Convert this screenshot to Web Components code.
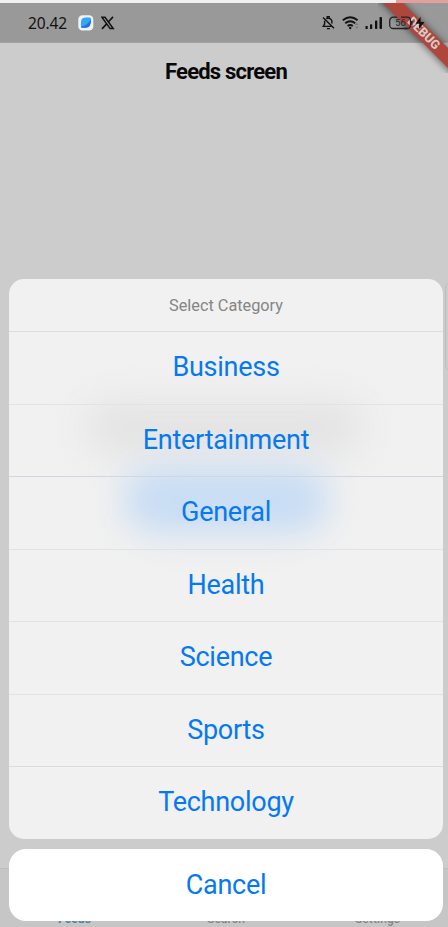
<!DOCTYPE html>
<html lang="en">
<head>
<meta charset="utf-8">
<title>Feeds screen</title>
<style>
html,body{margin:0;height:100%;overflow:hidden;background:#ccc;font-family:Roboto,"Noto Sans",sans-serif}
</style>
</head>
<body>
<phone-screen></phone-screen>
<script>
const define=(name,html)=>customElements.define(name,class extends HTMLElement{
  constructor(){super();this.attachShadow({mode:'open'}).innerHTML=html;}
});

define('status-bar',`<style>
:host{display:flex;align-items:center;box-sizing:border-box;height:40px;background:#999;color:#111;padding:0 23px 0 28px;border-bottom:1px solid #a3a3a3}
.time{font:400 15.5px/20px "Noto Sans",sans-serif;letter-spacing:-.15px;width:50px;white-space:nowrap;padding-top:1px}
svg{display:block;flex:none}
.gap{flex:1}
</style>
<span class="time">20.42</span>
<svg width="16" height="16" viewBox="0 0 16 16"><rect x=".3" y=".2" width="15" height="15.4" rx="4.2" fill="#f0f2f4"/><path d="M3 6.5Q3.3 2.8 8 2.6H12Q13.4 2.8 13 5.4Q12.4 12.7 7.5 12.7H3.8Q2.5 12.5 3 6.5Z" fill="#35a5f8"/><path d="M13 4.2Q13.2 12.7 7.8 12.7H3.8Q3 12.6 2.9 11.5C7 11.2 10.4 8.5 13 4.2Z" fill="#1f70ea"/></svg>
<svg style="margin-left:7px" width="14" height="14" viewBox="0 0 14 14" fill="none" stroke="#111"><path d="M.9 1.2H4L12.2 12.6H9.1Z" stroke-width="1.5"/><path d="M12 .9L7.5 5.8M5.7 7.9L1 12.9" stroke-width="1.6"/></svg>
<span class="gap"></span>
<svg width="13" height="15" viewBox="0 0 13 15" fill="none" stroke="#111" stroke-width="1.4"><path d="M5.2 2.9V1.6H7.2V2.9M4.2 3.7Q8.9 2.2 9.9 6V8.4M2.6 5.8V9L1.2 11.4H9.6M4.9 13.6H7.9M1 2.4L12 13.2"/></svg>
<svg style="margin-left:7px" width="18" height="14" viewBox="0 0 18 14" fill="none" stroke="#111" stroke-width="1.9"><path d="M.8 4.3Q8.2-1.8 15.6 4.3M3.2 7.2Q8.2 3.2 13.2 7.2M5.6 9.9Q8.2 8 10.8 9.9"/><circle cx="8.2" cy="12" r="1.2" fill="#111" stroke="none"/><path d="M12.9 9L14.7 7L16.5 9ZM12.9 10.8L14.7 12.8L16.5 10.8Z" fill="#777" stroke="none"/></svg>
<svg style="margin-left:5px" width="18" height="14" viewBox="0 0 18 14" fill="#111"><rect x=".5" y="10" width="2.2" height="3"/><rect x="5" y="8.2" width="2.2" height="4.8" rx=".6"/><rect x="10" y="4.4" width="2.3" height="8.6" rx=".7"/><rect x="14.5" y="1" width="2.5" height="12" rx=".8"/></svg>
<svg style="margin-left:6px" width="36" height="14" viewBox="0 0 36 14"><rect x=".7" y="1.2" width="20.8" height="11.3" rx="3.5" fill="none" stroke="#222" stroke-width="1.3"/></svg>`);

define('debug-ribbon',`<style>
:host{position:absolute;right:0;top:3px;width:70px;height:70px;overflow:hidden;pointer-events:none}
svg{display:block}
</style>
<svg width="70" height="70" viewBox="378 3 70 70"><defs><filter id="s" x="-30%" y="-30%" width="160%" height="160%"><feGaussianBlur stdDeviation="3.5"/></filter></defs>
<path d="M370-9L391-9L462 61V84Z" fill="#000" opacity=".5" filter="url(#s)"/><path d="M370-10H390L458 58V78Z" fill="#af463c"/>
<text transform="translate(424 33) rotate(45)" y="4.3" text-anchor="middle" textLength="40" font-family="Roboto" font-weight="800" font-size="12.5" fill="#d5cccb">DEBUG</text>
<g transform="translate(389 16)"><text x="6.3" y="10.4" font-family="Roboto" font-size="9.3" fill="#222">56</text><path d="M12 1.2H18Q21.5 1.2 21.5 4.7V9Q21.5 12.5 18 12.5H15M22.9 5V9.4" fill="none" stroke="#222" stroke-width="1.3"/><path d="M31.5.8L26.5 7.7H30.3L29.8 13.3L35.6 6H31.6Z" fill="#111"/></g></svg>`);

define('sheet-title',`<style>
:host{display:flex;height:52.5px;align-items:center;justify-content:center;font-size:16.3px;color:#858585}
span{position:relative;top:.5px}
</style><span><slot></slot></span>`);

define('sheet-action',`<style>
:host{display:flex;box-sizing:border-box;height:72.5px;align-items:center;justify-content:center;border-top:1px solid var(--line,#dcdcdc);padding-bottom:var(--lift,1px);font-size:27px;color:#0579f3;letter-spacing:-.27px}
</style><slot></slot>`);

define('action-sheet',`<style>
:host{position:absolute;left:9px;width:434px;top:278.6px;display:flex;flex-direction:column;gap:10.5px}
.group{position:relative;border-radius:15px;background:#f1f1f1;overflow:hidden;height:560px}
.glow{position:absolute;border-radius:30px}
.grey{left:76px;top:122px;width:278px;height:52px;background:#e3e3e3;filter:blur(18px)}
.blue{left:115px;top:188px;width:204px;height:66px;background:#c7dcf4;filter:blur(17px)}
.items{position:relative}
.cancel{background:#fff;border-radius:17px;height:72px;--line:transparent;--lift:2.5px}
</style>
<div class="group"><div class="glow grey"></div><div class="glow blue"></div><div class="items"><slot></slot></div></div>
<div class="cancel"><slot name="cancel"></slot></div>`);

define('tab-bar',`<style>
:host{position:absolute;left:0;right:0;bottom:0;height:59px;box-sizing:border-box;border-top:1px solid #bebebe;background:#c6c6c6;display:grid;grid-template-columns:149px 154px 149px;align-items:end;text-align:center;font-size:12px;font-weight:500;line-height:14px;color:#858585}
span{padding-bottom:1px;letter-spacing:.1px}
.on{color:#4f7fa8;font-weight:700}
</style><span class="on">Feeds</span><span>Search</span><span>Settings</span>`);

define('phone-screen',`<style>
:host{display:block;position:relative;width:448px;height:927px;overflow:hidden;background:#ccc}
.strip{height:3px;background:linear-gradient(90deg,#f0f0f0 396px,#e2a09c 396px)}
h1{margin:0;padding:15px 0 0 4px;text-align:center;font:700 22px/28px Roboto,sans-serif;letter-spacing:-.8px;color:#080808}
.field{position:absolute;left:445px;top:281px;width:20px;height:91px;border:1px solid #bebebe;border-radius:7px;box-sizing:border-box}
</style>
<div class="strip"></div><status-bar></status-bar><h1>Feeds screen</h1><div class="field"></div>
<tab-bar></tab-bar><debug-ribbon></debug-ribbon>
<action-sheet><sheet-title>Select Category</sheet-title><sheet-action>Business</sheet-action><sheet-action style="--line:#e2e2e2">Entertainment</sheet-action><sheet-action style="--line:#d0d7df">General</sheet-action><sheet-action style="--line:#e2e2e2">Health</sheet-action><sheet-action style="--line:#e2e2e2">Science</sheet-action><sheet-action style="--line:#e2e2e2">Sports</sheet-action><sheet-action>Technology</sheet-action><sheet-action slot="cancel">Cancel</sheet-action></action-sheet>`);
</script>
</body>
</html>
